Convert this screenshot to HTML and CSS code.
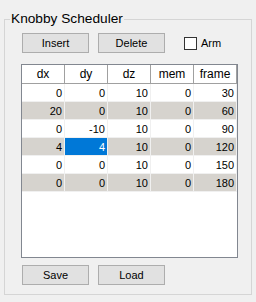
FILE: index.html
```html
<!DOCTYPE html>
<html lang="en">
<head>
    <meta charset="UTF-8">
    <title>Knobby Scheduler</title>
    <link rel="stylesheet" href="styles.css">
</head>
<body>
    <div class="group">
        <span class="group-title">Knobby Scheduler</span>

        <div class="toolbar">
            <button class="btn">Insert</button>
            <button class="btn">Delete</button>
            <label class="arm"><input type="checkbox"> Arm</label>
        </div>

        <div class="grid">
            <div class="row head">
                <div class="cell">dx</div>
                <div class="cell">dy</div>
                <div class="cell">dz</div>
                <div class="cell">mem</div>
                <div class="cell">frame</div>
            </div>
            <div class="row">
                <div class="cell">0</div><div class="cell">0</div><div class="cell">10</div><div class="cell">0</div><div class="cell">30</div>
            </div>
            <div class="row alt">
                <div class="cell">20</div><div class="cell">0</div><div class="cell">10</div><div class="cell">0</div><div class="cell">60</div>
            </div>
            <div class="row">
                <div class="cell">0</div><div class="cell">-10</div><div class="cell">10</div><div class="cell">0</div><div class="cell">90</div>
            </div>
            <div class="row alt">
                <div class="cell">4</div><div class="cell selected">4</div><div class="cell">10</div><div class="cell">0</div><div class="cell">120</div>
            </div>
            <div class="row">
                <div class="cell">0</div><div class="cell">0</div><div class="cell">10</div><div class="cell">0</div><div class="cell">150</div>
            </div>
            <div class="row alt">
                <div class="cell">0</div><div class="cell">0</div><div class="cell">10</div><div class="cell">0</div><div class="cell">180</div>
            </div>
        </div>

        <div class="toolbar bottom">
            <button class="btn">Save</button>
            <button class="btn">Load</button>
        </div>
    </div>
</body>
</html>
```

FILE: styles.css
```css
/* Windows-style group box with a grid */
body {
    margin: 0;
    width: 256px;
    height: 302px;
    background-color: #f0f0f0;
    font-family: "Liberation Sans", Arial, sans-serif;
    font-size: 11px;
    color: #000;
}

.group {
    position: relative;
    box-sizing: border-box;
    width: 248px;
    height: 276px;
    margin: 19px 0 0 4px;
    padding: 13px 0 0 17px;
    border: 1px solid #d5d5d5;
}

.group-title {
    position: absolute;
    top: -9px;
    left: 5px;
    padding: 0 1px;
    font-size: 13.7px;
    line-height: 16px;
    background-color: #f0f0f0;
}

.toolbar {
    display: flex;
    align-items: center;
    gap: 9px;
    height: 20px;
}

.toolbar.bottom {
    margin-top: 7px;
}

.btn {
    box-sizing: border-box;
    width: 67px;
    height: 20px;
    padding: 0;
    border: 1px solid #adadad;
    background-color: #e1e1e1;
    font-family: inherit;
    font-size: 11px;
    color: #000;
}

.arm {
    display: flex;
    align-items: center;
    gap: 4px;
    margin-left: 10px;
    font-size: 11px;
}

.arm input {
    appearance: none;
    box-sizing: border-box;
    width: 13px;
    height: 13px;
    margin: 0;
    border: 1px solid #333;
    background-color: #fff;
}

.grid {
    box-sizing: border-box;
    width: 217px;
    height: 194px;
    margin: 11px 0 0 -1px;
    border: 1px solid #828790;
    background-color: #fff;
}

.row {
    display: grid;
    grid-template-columns: repeat(5, 43px);
}

.cell {
    box-sizing: border-box;
    height: 18px;
    padding: 1px 2px 0 0;
    line-height: 16px;
    text-align: right;
    border-right: 1px solid #f0f0f0;
    border-bottom: 1px solid #f0f0f0;
}

.head .cell {
    height: 19px;
    padding: 1px 0 0;
    font-size: 12px;
    line-height: 17px;
    text-align: center;
    border-right-color: #a0a0a0;
    border-bottom-color: #a0a0a0;
}

.alt .cell {
    background-color: #d6d3ce;
}

.cell.selected,
.alt .cell.selected {
    background-color: #0078d7;
    color: #fff;
}
```
